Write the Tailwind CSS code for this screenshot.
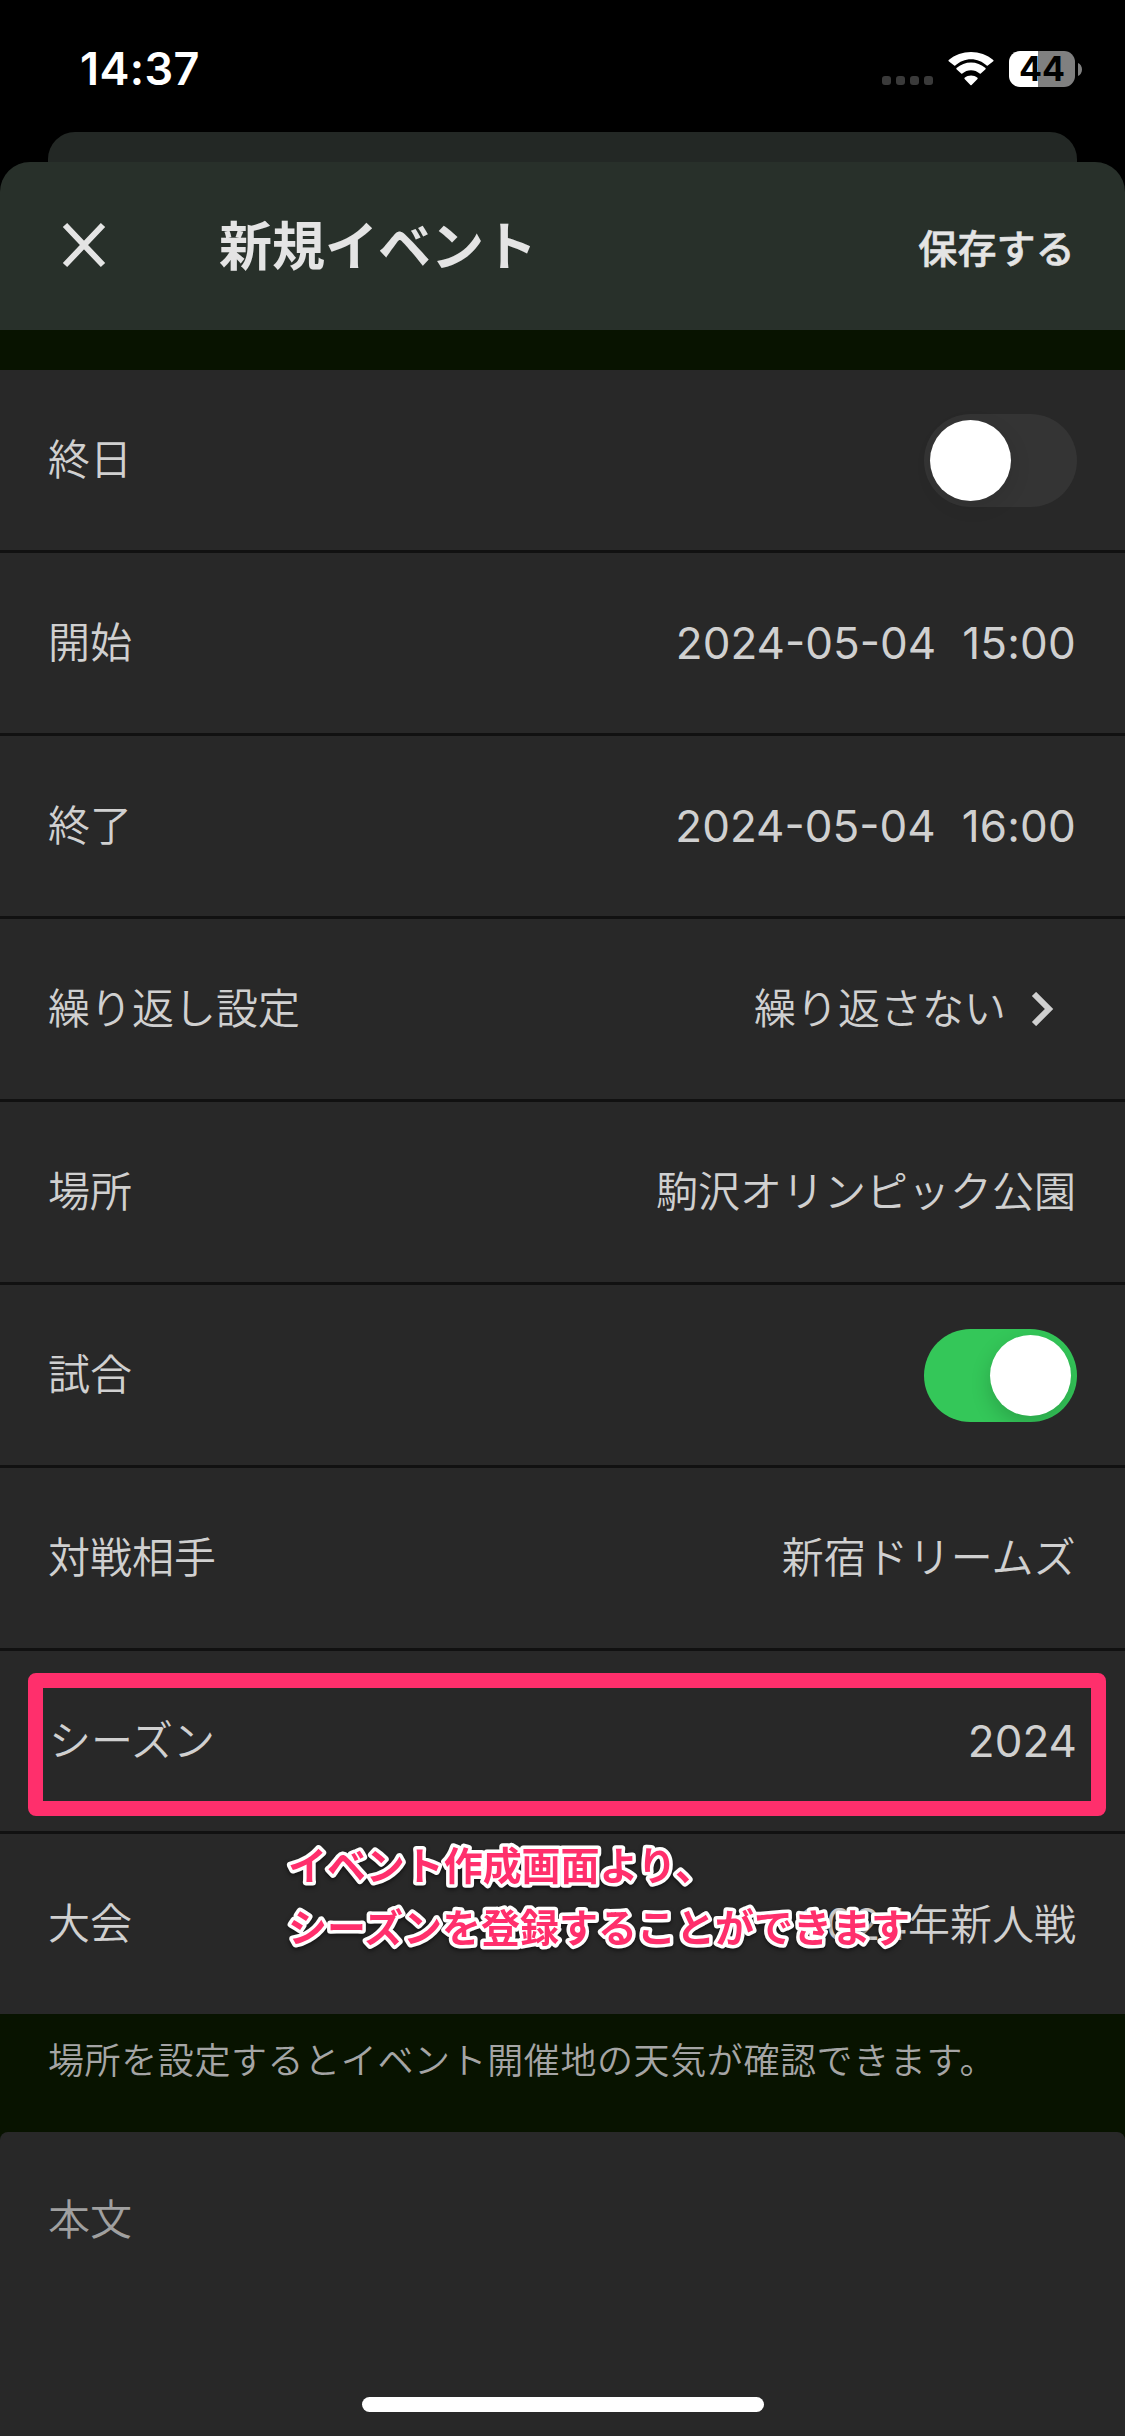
<!DOCTYPE html>
<html lang="ja">
<head>
<meta charset="utf-8">
<title>新規イベント</title>
<script src="https://cdn.jsdelivr.net/npm/@tailwindcss/browser@4"></script>
</head>
<body class="bg-black">
<div class="relative flex h-[2436px] w-[1125px] flex-col overflow-hidden bg-black font-['Inter','Noto_Sans_CJK_JP',sans-serif] text-[#d0d0d0]">
  <!-- Status bar -->
  <div class="flex h-[132px] items-start justify-between pl-[80px] pr-[43px]">
    <div class="pt-[41px] text-[45px] leading-[56px] font-semibold tracking-[0.4px] text-white">14:37</div>
    <div class="flex items-start pt-[51px]">
      <div class="mt-[25px] mr-[15px] flex gap-[5px]">
        <i class="size-[9px] rounded-[3px] bg-[#3a3a3a]"></i><i class="size-[9px] rounded-[3px] bg-[#3a3a3a]"></i><i class="size-[9px] rounded-[3px] bg-[#3a3a3a]"></i><i class="size-[9px] rounded-[3px] bg-[#3a3a3a]"></i>
      </div>
      <svg class="mt-[1px] mr-[15px]" width="46" height="34" viewBox="0 0 46 34" fill="#fff"><path d="M23 7.2c5.900 0 11.500 2.300 15.700 6.400.3.3.8.3 1.100 0l5.500-4.400c.3-.3.3-.8 0-1.100C33-2.700 13-2.700.7 8.100c-.3.300-.3.800 0 1.100l5.500 4.400c.3.300.8.300 1.100 0C11.500 9.500 17.100 7.200 23 7.200z"/><path d="M23 18.200c3.200 0 6.300 1.200 8.700 3.400.3.300.8.300 1.100 0l4.700-4.400c.3-.3.3-.9 0-1.200-8.200-7.500-20.800-7.500-29 0-.3.300-.3.900 0 1.200l4.700 4.400c.3.300.8.300 1.100 0 2.400-2.200 5.500-3.400 8.700-3.400z"/><path d="M29.500 27c.3-.3.3-.9 0-1.200-3.700-3.200-9.200-3.200-12.900 0-.3.300-.3.900 0 1.200l5.800 6c.3.400.9.400 1.200 0z"/></svg>
      <div class="flex h-[36px] w-[66px] items-center justify-center rounded-[11px] bg-linear-to-r from-white from-[29px] to-[#808080] to-[29px] text-[34px] leading-[36px] font-bold text-black">44</div>
      <svg class="mt-[12px] ml-[3px]" width="4" height="13" viewBox="0 0 4 13" fill="#808080"><path d="M0 0c2.500 1 4 3.600 4 6.500S2.500 12 0 13z"/></svg>
    </div>
  </div>
  <!-- Sheet behind the current one -->
  <div class="mx-[48px] h-[30px] rounded-t-[27px] bg-[#232825]"></div>
  <!-- Header -->
  <header class="flex h-[168px] shrink-0 items-center rounded-t-[30px] bg-[#28302a] pr-[50px] pl-[62px] text-[#e4e4e4]">
    <svg class="-mt-[2px]" width="44" height="46" viewBox="0 0 44 46" stroke="#e4e4e4" stroke-width="6" fill="none"><path d="M3 3l38 40M41 3L3 43"/></svg>
    <h1 class="mt-[2px] ml-[113px] text-[53px] leading-none font-bold">新規イベント</h1>
    <div class="mt-[5px] ml-auto text-[39px] leading-none font-medium tracking-[0.2px] [-webkit-text-stroke:0.6px_#e4e4e4]">保存する</div>
  </header>
  <div class="h-[40px] shrink-0 bg-[#081300]"></div>
  <!-- Form rows -->
  <main class="flex shrink-0 flex-col divide-y-[3px] divide-[#111] bg-[#282828] text-[42px] leading-none font-[350]">
    <div class="flex h-[183px] items-center justify-between px-[48px]"><span>終日</span>
      <span class="flex h-[93px] w-[153px] rounded-full bg-[#343434] p-[6px]"><i class="size-[81px] rounded-full bg-white shadow-[3px_6px_20px_rgba(0,0,0,0.08)]"></i></span></div>
    <div class="flex h-[183px] items-center justify-between pr-[49px] pl-[48px]"><span>開始</span><span class="flex gap-[26px] text-[44px] font-normal"><span>2024-05-04</span><span class="tracking-[0.2px]">15:00</span></span></div>
    <div class="flex h-[183px] items-center justify-between pr-[49px] pl-[48px]"><span>終了</span><span class="flex gap-[26px] text-[44px] font-normal"><span>2024-05-04</span><span class="tracking-[0.2px]">16:00</span></span></div>
    <div class="flex h-[183px] items-center justify-between px-[48px]"><span>繰り返し設定</span><span class="flex items-center pr-[23px]">繰り返さない<svg class="ml-[25px]" width="23" height="34" viewBox="0 0 23 34" fill="none" stroke="#d0d0d0" stroke-width="6"><path d="M3 2l15 15L3 32"/></svg></span></div>
    <div class="flex h-[183px] items-center justify-between pr-[49px] pl-[48px]"><span>場所</span><span>駒沢オリンピック公園</span></div>
    <div class="flex h-[183px] items-center justify-between px-[48px]"><span>試合</span>
      <span class="flex h-[93px] w-[153px] justify-end overflow-hidden rounded-full bg-[#34c759] p-[6px]"><i class="size-[81px] rounded-full bg-white shadow-[0_8px_20px_rgba(0,0,0,0.18)]"></i></span></div>
    <div class="flex h-[183px] items-center justify-between pr-[49px] pl-[48px]"><span>対戦相手</span><span class="tracking-[0.2px]">新宿ドリームズ</span></div>
    <div class="relative flex h-[183px] items-center justify-between px-[48px]"><span class="pl-[1px]">シーズン</span><span class="text-[44px] font-normal">2024</span>
      <div class="absolute top-[22px] left-[28px] h-[143px] w-[1078px] rounded-[8px] border-[15px] border-[#ff2f6c]"></div></div>
    <div class="relative flex h-[180px] items-center justify-between pr-[49px] pl-[48px]"><span>大会</span><span><span class="text-[44px] font-normal">2024</span>年新人戦</span>
      <!-- Callout lies over the row -->
      <svg class="absolute top-0 left-[280px] text-[39px] font-bold drop-shadow-[0_2px_2px_rgba(0,0,0,0.5)]" width="660" height="130" fill="#ff2f6c" stroke="#fff" stroke-width="7" stroke-linejoin="round" paint-order="stroke">
        <text x="8" y="46" textLength="426">イベント作成画面より、</text>
        <text x="8" y="108">シーズンを登録することができます</text>
      </svg></div>
  </main>
  <div class="h-[118px] shrink-0 bg-[#081300] px-[48px] pt-[29px] text-[36px] leading-[36px] font-[350] tracking-[0.6px] text-[#a5a5a5]">場所を設定するとイベント開催地の天気が確認できます。</div>
  <div class="bg-[#081300]">
    <div class="flex h-[304px] flex-col items-center rounded-t-[8px] bg-[#282828]">
      <div class="w-full px-[48px] pt-[67px] text-[42px] leading-[42px] font-[350] text-[#a0a0a0]">本文</div>
      <div class="mt-auto mb-[24px] h-[15px] w-[402px] rounded-full bg-white"></div>
    </div>
  </div>
</div>
</body>
</html>
